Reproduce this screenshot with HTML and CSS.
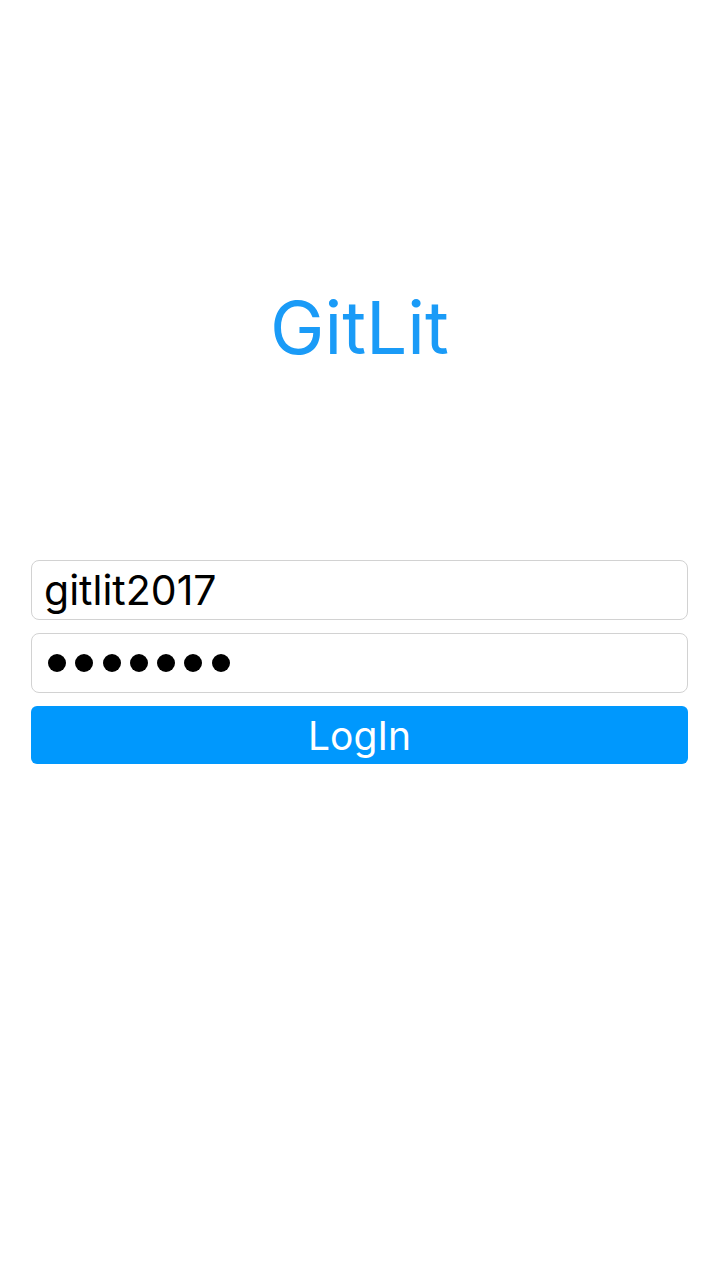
FILE: index.html
```html
<!DOCTYPE html>
<html>
<head>
<meta charset="utf-8">
<link rel="stylesheet" href="styles.css">
</head>
<body>
<main class="screen">
  <h1 class="title">GitLit</h1>
  <form class="form">
    <div class="field">gitlit2017</div>
    <div class="field field-password" aria-label="password">
      <span class="dot"></span><span class="dot"></span><span class="dot"></span><span class="dot"></span><span class="dot"></span><span class="dot"></span><span class="dot"></span>
    </div>
    <button type="button" class="btn">LogIn</button>
  </form>
</main>
</body>
</html>
```
FILE: styles.css
```css
html, body {
  margin: 0;
  padding: 0;
  background: #ffffff;
}
.screen {
  width: 719px;
  height: 1280px;
  font-family: Inter, "Liberation Sans", Arial, sans-serif;
  display: flex;
  flex-direction: column;
  align-items: center;
}
.title {
  margin: 278px 0 0 0;
  height: 100px;
  line-height: 100px;
  font-size: 73px;
  font-weight: normal;
  color: #1a9bf7;
}
.form {
  margin-top: 182px;
  width: 657px;
  display: flex;
  flex-direction: column;
  gap: 13px;
}
.field {
  box-sizing: border-box;
  height: 60px;
  border: 1px solid #d2d2d2;
  border-radius: 8px;
  padding: 0 0 0 12px;
  font-size: 41px;
  line-height: 58px;
  color: #000;
  display: flex;
  align-items: center;
}
.field-password {
  gap: 9.3px;
  padding-left: 16px;
}
.dot {
  width: 18px;
  height: 18px;
  border-radius: 50%;
  background: #000;
}
.btn {
  height: 58px;
  border: none;
  border-radius: 6px;
  background: #0098fd;
  color: #ffffff;
  font-family: Inter, "Liberation Sans", Arial, sans-serif;
  font-size: 39px;
  padding: 0;
  cursor: pointer;
}
```
